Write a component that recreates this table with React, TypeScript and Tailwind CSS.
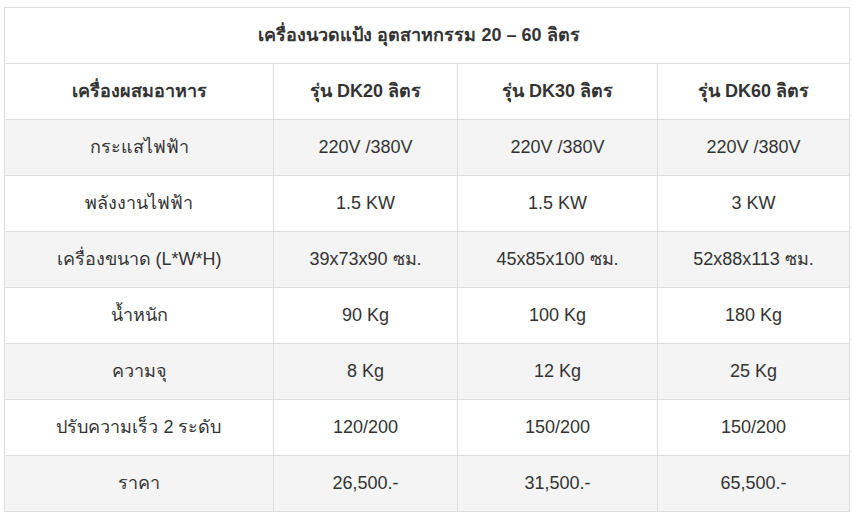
const rows: string[][] = [
  ["กระแสไฟฟ้า", "220V /380V", "220V /380V", "220V /380V"],
  ["พลังงานไฟฟ้า", "1.5 KW", "1.5 KW", "3 KW"],
  ["เครื่องขนาด (L*W*H)", "39x73x90 ซม.", "45x85x100 ซม.", "52x88x113 ซม."],
  ["น้ำหนัก", "90 Kg", "100 Kg", "180 Kg"],
  ["ความจุ", "8 Kg", "12 Kg", "25 Kg"],
  ["ปรับความเร็ว 2 ระดับ", "120/200", "150/200", "150/200"],
  ["ราคา", "26,500.-", "31,500.-", "65,500.-"],
];

const head = ["เครื่องผสมอาหาร", "รุ่น DK20 ลิตร", "รุ่น DK30 ลิตร", "รุ่น DK60 ลิตร"];

function Cell({ children, bold }: { children: React.ReactNode; bold?: boolean }) {
  return (
    <div
      className={`flex h-[56px] items-center justify-center border-b border-r border-[#dddddd] ${
        bold ? "font-bold" : ""
      }`}
    >
      {children}
    </div>
  );
}

export default function App() {
  return (
    <div className="min-h-[517px] bg-white pl-[4px] pt-[7px] font-['Liberation_Sans',Arial,sans-serif] text-[18px] text-[#333333]">
      <div className="w-[846px] border-l border-t border-[#dddddd]">
        <div className="flex h-[56px] items-center justify-center border-b border-r border-[#dddddd] pr-4 font-bold">
          เครื่องนวดแป้ง อุตสาหกรรม 20 – 60 ลิตร
        </div>
        <div className="grid grid-cols-[269px_184px_200px_192px]">
          {head.map((h) => (
            <Cell key={h} bold>
              {h}
            </Cell>
          ))}
        </div>
        {rows.map((r, i) => (
          <div
            key={r[0]}
            className={`grid grid-cols-[269px_184px_200px_192px] ${i % 2 === 0 ? "bg-[#f4f4f4]" : "bg-white"}`}
          >
            {r.map((c, j) => (
              <Cell key={j}>{c}</Cell>
            ))}
          </div>
        ))}
      </div>
    </div>
  );
}
